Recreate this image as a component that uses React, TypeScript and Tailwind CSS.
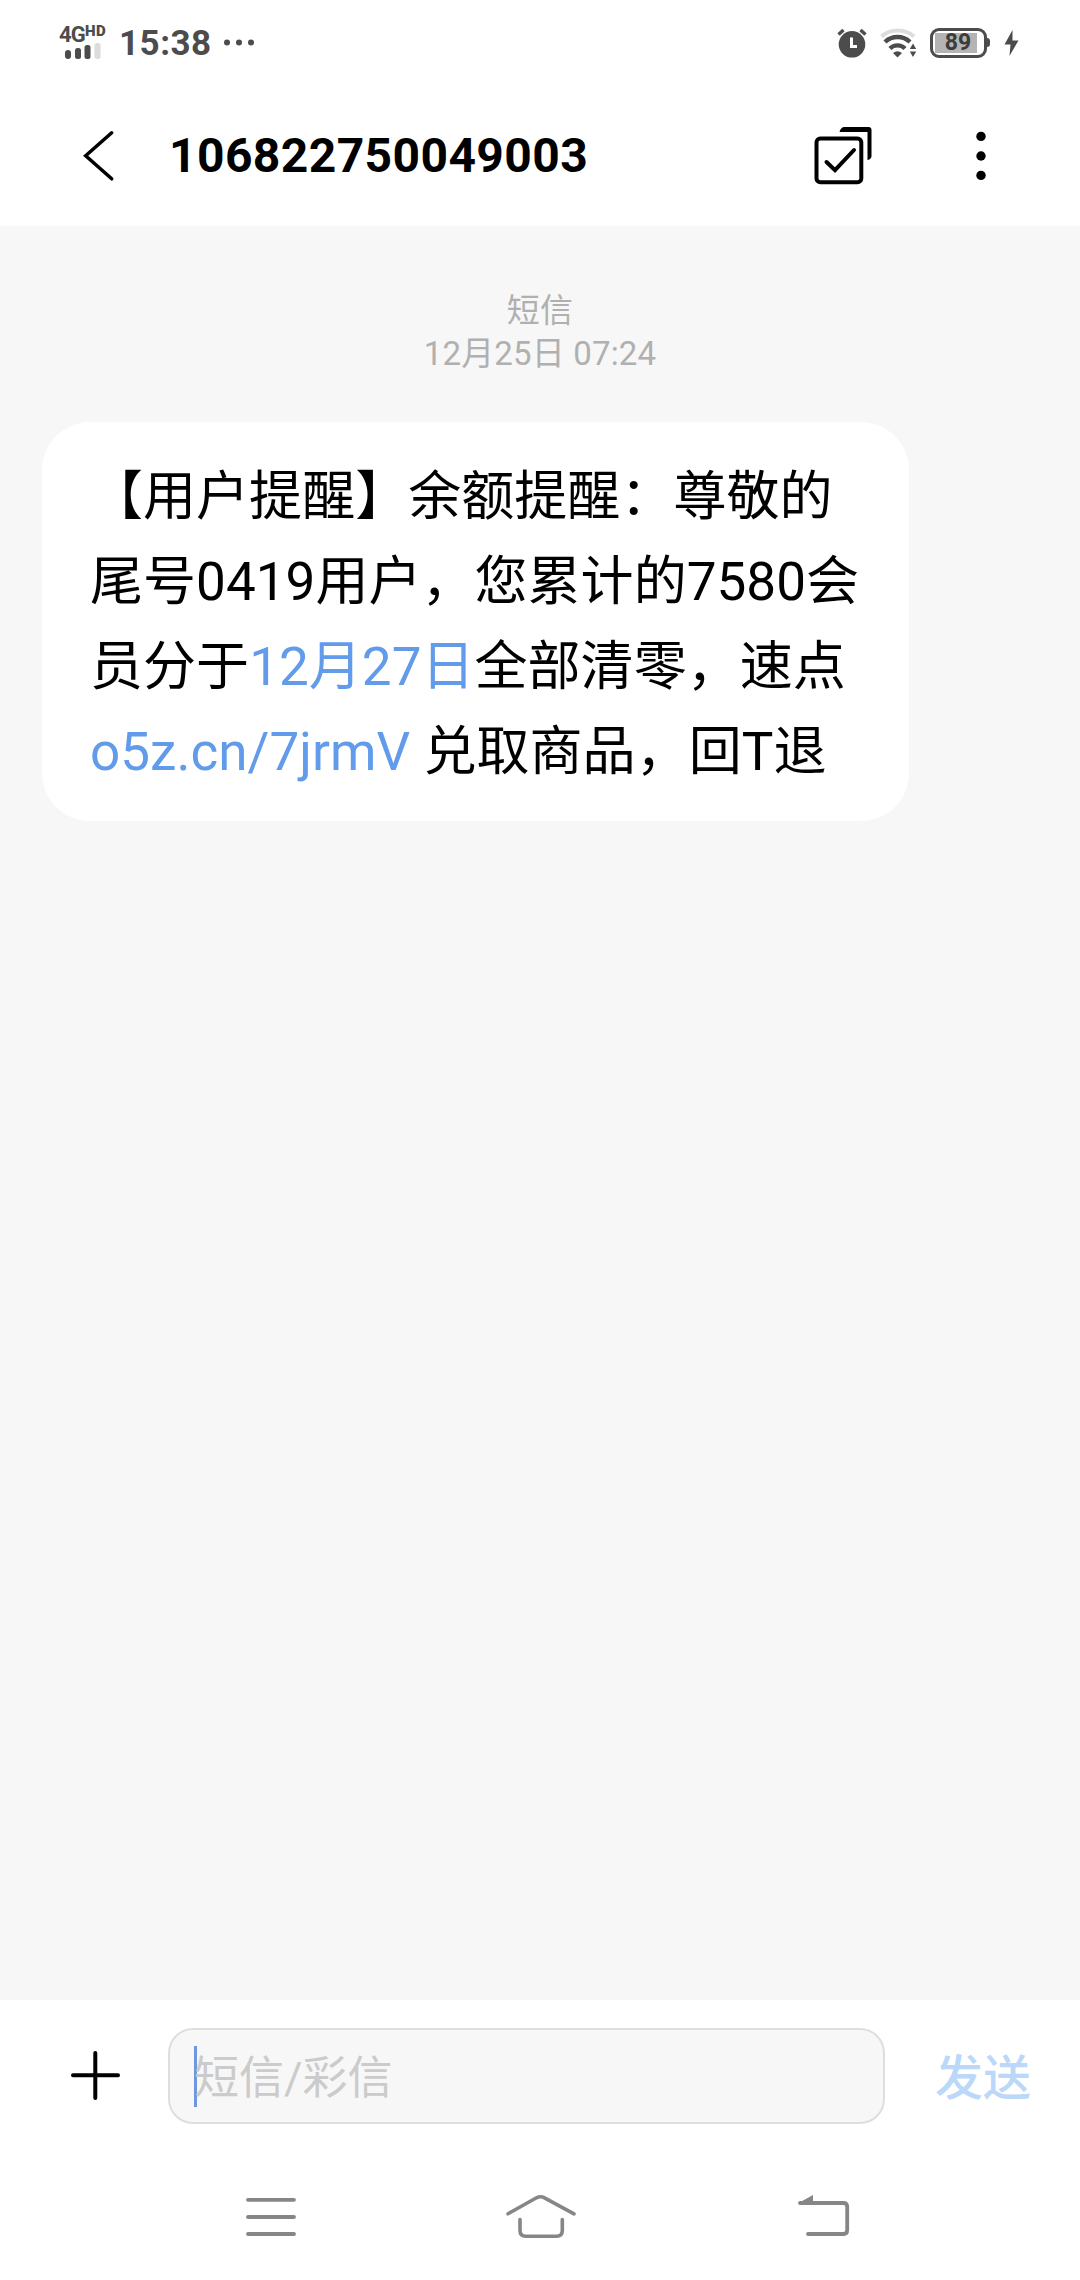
import type { ReactNode } from 'react';

const PHONE_NUMBER = '106822750049003';

export default function App() {
  return (
    <main className="flex h-[2280px] w-[1080px] flex-col overflow-hidden bg-white font-[Roboto,'Noto_Sans_CJK_SC',sans-serif] text-black">
      <StatusBar />
      <ChatHeader />
      <section className="flex flex-1 flex-col bg-[#f7f7f7]">
        <div className="mt-[63px] text-center text-[33px] leading-[43px] tracking-[0.15px] text-[#b0b0b0]">
          <p>短信</p>
          <p>12月25日 07:24</p>
        </div>
        <MessageBubble>
          <p>【用户提醒】余额提醒：尊敬的</p>
          <p>尾号0419用户，您累计的7580会</p>
          <p>
            员分于<a className="text-[#619bea]">12月27日</a>全部清零，速点
          </p>
          <p>
            <a className="text-[#619bea]">o5z.cn/7jrmV</a> 兑取商品，回T退
          </p>
        </MessageBubble>
      </section>
      <Composer />
      <NavigationBar />
    </main>
  );
}

function StatusBar() {
  return (
    <div className="flex h-[86px] shrink-0 items-center justify-between pr-[60px] pl-[59px] text-[#4c4c4c]">
      <div className="flex items-center">
        <div className="flex w-[48px] flex-col">
          <div className="flex h-[17px] items-start font-bold">
            <span className="text-[22px] leading-[17px] tracking-[-0.8px]">4G</span>
            <span className="text-[15px] leading-[10px] font-black tracking-[0.5px]">HD</span>
          </div>
          <svg width="48" height="17" viewBox="0 0 48 17" fill="currentColor">
            <rect x="6" y="7" width="6" height="9" rx="3" />
            <rect x="16" y="5" width="6" height="11" rx="2.5" />
            <rect x="25.5" y="2" width="6" height="14" rx="2.5" />
            <rect x="35.5" y="0" width="6" height="16" rx="2.5" fill="#dcdcdc" />
          </svg>
        </div>
        <span className="ml-[12px] text-[35px] leading-none font-bold tracking-[0.5px]">15:38</span>
        <svg className="ml-[11px]" width="32" height="8" viewBox="0 0 32 8" fill="currentColor">
          <circle cx="4" cy="3.5" r="3" />
          <circle cx="16" cy="3.5" r="3" />
          <circle cx="28" cy="3.5" r="3" />
        </svg>
      </div>

      <div className="flex items-center pb-px">
        <svg width="30" height="30" viewBox="0 0 30 30" fill="none">
          <circle cx="15" cy="16.3" r="13.3" fill="currentColor" />
          <path d="M1.5 6.5 6.5 2M28.5 6.5 23.5 2" stroke="currentColor" strokeWidth="3.4" />
          <path d="M14.5 9.5v9H20" stroke="#fff" strokeWidth="3" />
        </svg>
        <svg className="ml-[13px]" width="38" height="30" viewBox="0 0 38 30" fill="none">
          <path d="M1.5 8.5C10 .5 25 .5 34 8.5" stroke="#dcdcdc" strokeWidth="4" />
          <path d="M5 14C12 7.4 23 7.4 30 14" stroke="currentColor" strokeWidth="4.4" />
          <path d="M10 20.5C14 16.3 21 16.3 25 20.5" stroke="currentColor" strokeWidth="4.4" />
          <path d="M13 25q4.5-3.5 9 0l-4.5 4.5z" fill="currentColor" />
          <path d="m33 15.5 3.2 5.5h-6.4zM33 29l3.2-5.5h-6.4z" fill="currentColor" />
        </svg>
        <div className="ml-[12px] flex items-center">
          <div className="flex h-[30px] w-[57px] items-center rounded-[9px] border-[3px] border-current pl-[1.5px]">
            <span className="flex h-[20px] w-[42px] items-center justify-center bg-[#b4b4b4] pl-[5px] text-[23px] leading-none font-bold text-[#3c3c3c]">
              89
            </span>
          </div>
          <span className="h-[9px] w-[3px] rounded-r-sm bg-current" />
        </div>
        <svg className="mr-px ml-[14px]" width="15" height="28" viewBox="0 0 15 28" fill="currentColor">
          <path d="M8.5 1 .5 15.5h6L5.5 27l9-15.5H8.5z" />
        </svg>
      </div>
    </div>
  );
}

function ChatHeader() {
  return (
    <header className="flex h-[140px] shrink-0 items-start pl-[80px]">
      <svg className="mt-[42px]" width="40" height="56" viewBox="80 128 40 56" fill="none">
        <path
          d="M111.7 132.8 85.7 155.8 111.7 178.8"
          stroke="#000"
          strokeWidth="3.5"
          strokeLinecap="round"
        />
      </svg>
      <h1 className="mt-[42px] ml-[49px] w-[640px] text-[48px] leading-[56px] font-bold tracking-[0.4px]">
        {PHONE_NUMBER}
      </h1>
      <svg className="mt-[38px]" width="66" height="64" viewBox="809 124 66 64" fill="none" stroke="#000">
        <rect x="816.5" y="138.5" width="44.8" height="43.8" rx="3.8" strokeWidth="4" />
        <path d="m826.5 162 8.5 8.2 19-20.2" strokeWidth="4" strokeLinecap="round" />
        <path d="M839.5 132c.5-3 2.5-5 5-5h24q3 0 3 3v26q0 3-4 4v-28z" fill="#000" stroke="none" />
      </svg>
      <svg className="mt-[42px] ml-[96px]" width="20" height="56" viewBox="971 128 20 56">
        <circle cx="981" cy="136.4" r="4.7" />
        <circle cx="981" cy="156" r="4.7" />
        <circle cx="981" cy="175.4" r="4.7" />
      </svg>
    </header>
  );
}

function MessageBubble({ children }: { children: ReactNode }) {
  return (
    <article className="mt-[47px] ml-[42px] h-[399px] w-[867px] rounded-[48px] bg-white pt-[33px] pl-[48px] text-[53px] leading-[85px] tracking-[0.04px] whitespace-nowrap">
      {children}
    </article>
  );
}

function Composer() {
  return (
    <div className="flex h-[152px] shrink-0 items-start pl-[70px]">
      <svg className="mt-[50px]" width="52" height="52" viewBox="0 0 52 52" stroke="#000" strokeWidth="4" strokeLinecap="round">
        <path d="M3 25.3h45M25.3 3v45" />
      </svg>
      <div className="mt-[28px] ml-[46px] flex h-[96px] w-[717px] items-center rounded-[25px] border-2 border-[#dedede] bg-[#f7f7f7] pl-[24px]">
        <span className="-mr-[3px] h-[61px] w-[3px] bg-[#6f96e0]" />
        <span className="pt-[4px] text-[45px] leading-none text-[#cbcbcb]">短信/彩信</span>
      </div>
      <button type="button" className="mt-[51px] ml-[50px] text-[48px] leading-[56px] font-medium text-[#bbd7f9]">
        发送
      </button>
    </div>
  );
}

function NavigationBar() {
  return (
    <nav className="flex h-[128px] shrink-0 items-start pt-[38px] pl-[244px]">
      <svg width="54" height="54" viewBox="244 2190 54 54" stroke="#868686" strokeWidth="3.8" strokeLinecap="round">
        <path d="M248 2199.8h46M248 2217h46M248 2234h46" />
      </svg>
      <svg className="ml-[206px]" width="74" height="54" viewBox="504 2190 74 54" fill="none" stroke="#868686" strokeWidth="3.6" strokeLinecap="round">
        <path d="m508 2213.8 28.5-16q4-2 8 0l29.5 16" />
        <path d="M520 2219.5v11q0 5.8 5.8 5.8h30.7q5.8 0 5.8-5.8v-11" />
      </svg>
      <svg className="ml-[218px]" width="58" height="54" viewBox="796 2190 58 54" fill="none" stroke="#868686" strokeWidth="3.8" strokeLinecap="round">
        <path d="M800 2203h43.5q3.7 0 3.7 3.7V2230q0 4-3.7 4H808" />
        <path d="M798.5 2203 813 2195v8z" fill="#868686" stroke="none" />
      </svg>
    </nav>
  );
}
